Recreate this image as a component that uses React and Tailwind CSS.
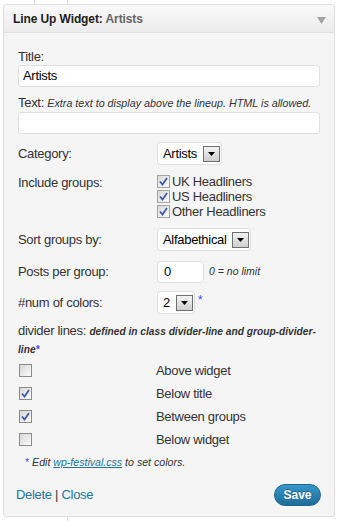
import { useState } from "react";

const font = { fontFamily: '"Liberation Sans", Arial, sans-serif' };

function SelectBox({ value, width }) {
  return (
    <div className={`${width} h-[23px] flex items-center justify-between bg-white border border-[#dfdfdf] rounded-[3px] pl-[5px] pr-[1px]`}>
      <span className="text-[13px] tracking-[-0.3px] text-black">{value}</span>
      <span className="w-[17px] h-[16px] border border-[#6f6f6f] bg-gradient-to-b from-[#f2f2f2] to-[#cfcfcf] flex items-center justify-center">
        <svg width="7" height="4" viewBox="0 0 7 4"><path d="M0 0h7L3.5 4z" fill="#000" /></svg>
      </span>
    </div>
  );
}

function Check({ checked, light }) {
  return (
    <span
      className={`w-[13px] h-[13px] shrink-0 border flex items-center justify-center bg-gradient-to-br from-[#d8d8d8] to-[#fbfbfb] ${
        light ? "border-[#a3a3a3]" : "border-[#8b8b8b]"
      }`}
    >
      {checked && (
        <svg width="9" height="9" viewBox="0 0 9 9">
          <path d="M1 4.5 L3.5 7.5 L8 1" stroke="#3f56a6" strokeWidth="1.7" fill="none" />
        </svg>
      )}
    </span>
  );
}

export default function App() {
  const [groups] = useState([
    { name: "UK Headliners", on: true },
    { name: "US Headliners", on: true },
    { name: "Other Headliners", on: true },
  ]);
  const [dividers] = useState([
    { name: "Above widget", on: false },
    { name: "Below title", on: true },
    { name: "Between groups", on: true },
    { name: "Below widget", on: false },
  ]);

  return (
    <div className="relative w-[338px] h-[521px] bg-white overflow-hidden pt-[4px] pl-[3px]" style={font}>
      {/* background columns of the admin page */}
      <div className="absolute left-[34px] top-0 h-[4px] w-px bg-[#dedede]" />
      <div className="absolute left-[67px] top-0 h-[4px] w-px bg-[#dedede]" />
      <div className="absolute left-[67px] bottom-0 h-[5px] w-px bg-[#dedede]" />

      <div className="w-[332px] h-[513px] border border-[#dfdfdf] rounded-[3px] bg-[#f5f5f5] flex flex-col">
        {/* Header */}
        <div className="h-[28px] shrink-0 flex items-center justify-between pl-[9px] pr-[8px] border-b border-[#dfdfdf] bg-gradient-to-b from-[#f9f9f9] to-[#ececec] rounded-t-[3px]">
          <h4 className="text-[12px] font-bold text-[#222] tracking-[-0.1px] pt-[1px]">
            Line Up Widget: <span className="text-[#666]">Artists</span>
          </h4>
          <svg width="9" height="7" viewBox="0 0 9 7" className="mt-[3px]">
            <path d="M0 0h9L4.5 7z" fill="#a5a5a5" />
          </svg>
        </div>

        {/* Body */}
        <div className="flex-1 flex flex-col pl-[14px] pr-[14px] pt-[16px] text-[13px] tracking-[-0.3px] text-[#333]">
          <div className="leading-[16px]">Title:</div>
          <div className="h-[22px] bg-white border border-[#dfdfdf] rounded-[3px] flex items-center pl-[4px] text-black">
            Artists
          </div>

          <div className="leading-[16px] mt-[8px]">
            Text:{" "}
            <i className="text-[10.75px] tracking-[0px]">Extra text to display above the lineup. HTML is allowed.</i>
          </div>
          <div className="h-[22px] mt-[1px] bg-white border border-[#dfdfdf] rounded-[3px]" />

          <div className="flex items-center mt-[8px]">
            <span className="w-[139px]">Category:</span>
            <SelectBox value="Artists" width="w-[65px]" />
          </div>

          <div className="flex mt-[9px]">
            <span className="w-[139px] leading-[15px] pt-[1px]">Include groups:</span>
            <div className="flex flex-col">
              {groups.map((g) => (
                <label key={g.name} className="h-[15px] flex items-center gap-[2px]">
                  <Check checked={g.on} light />
                  <span className="leading-[15px]">{g.name}</span>
                </label>
              ))}
            </div>
          </div>

          <div className="flex items-center mt-[9px]">
            <span className="w-[139px]">Sort groups by:</span>
            <SelectBox value="Alfabethical" width="w-[94px]" />
          </div>

          <div className="flex items-center mt-[10px]">
            <span className="w-[139px]">Posts per group:</span>
            <div className="w-[47px] h-[22px] bg-white border border-[#dfdfdf] rounded-[3px] flex items-center pl-[6px] text-black">
              0
            </div>
            <i className="ml-[5px] text-[10.5px] tracking-[0px]">0 = no limit</i>
          </div>

          <div className="flex items-center mt-[8px]">
            <span className="w-[139px]">#num of colors:</span>
            <SelectBox value="2" width="w-[38px]" />
            <span className="ml-[3px] -mt-[6px] text-[#4a4af0] text-[12px]">*</span>
          </div>

          <div className="mt-[8px] leading-[17px]">
            divider lines:{" "}
            <i className="font-bold text-[10.2px] tracking-[0px]">
              defined in class divider-line and group-divider-line<span className="text-[#4a4af0]">*</span>
            </i>
          </div>

          <div className="flex flex-col mt-[1px]">
            {dividers.map((d) => (
              <label key={d.name} className="h-[23px] flex items-center">
                <span className="w-[138px] pl-[1px] flex">
                  <Check checked={d.on} />
                </span>
                <span>{d.name}</span>
              </label>
            ))}
          </div>

          <div className="mt-[3px] leading-[16px] pl-[7px] text-[10.6px] tracking-[0px] italic">
            <span className="text-[#4a4af0] not-italic">*</span> Edit{" "}
            <a className="text-[#21759b] underline">wp-festival.css</a> to set colors.
          </div>

          <div className="flex items-center justify-between mt-[14px]">
            <div className="-ml-[2px] text-[#21759b]">
              <a>Delete</a> <span className="text-[#333]">|</span> <a>Close</a>
            </div>
            <button className="h-[22px] w-[47px] -mr-[1px] rounded-full border border-[#1c6792] bg-gradient-to-b from-[#3597ca] to-[#1e6c97] text-white text-[12px] font-bold tracking-[0px] [text-shadow:0_-1px_0_rgba(0,0,0,0.3)]">
              Save
            </button>
          </div>
        </div>
      </div>
    </div>
  );
}
